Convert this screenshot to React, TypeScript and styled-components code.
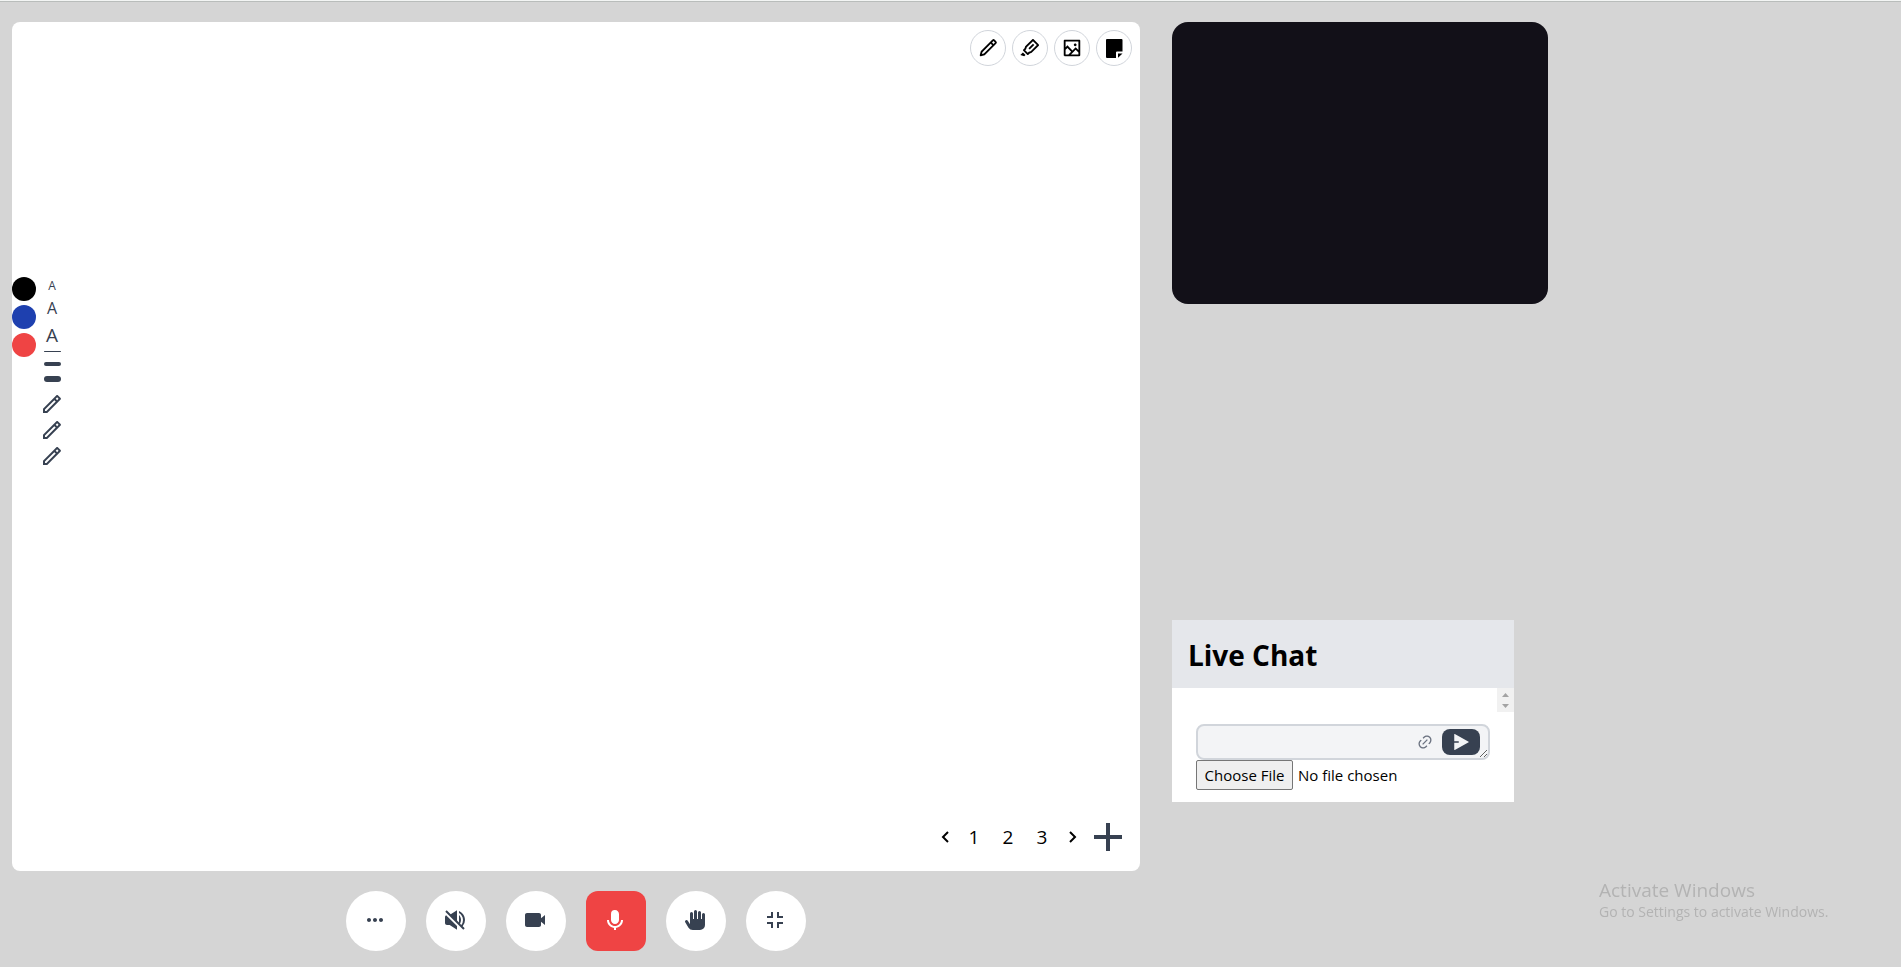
import React from 'react';
import styled, { createGlobalStyle } from 'styled-components';
import {
  BiChevronLeft,
  BiChevronRight,
  BiDotsHorizontalRounded,
  BiExitFullscreen,
  BiPencil,
  BiPlus,
  BiSolidHand,
  BiSolidMicrophone,
  BiSolidVideo,
  BiSolidVolumeMute,
} from 'react-icons/bi';
import { RiImage2Line, RiLink, RiMarkPenLine, RiPencilLine, RiSendPlane2Fill } from 'react-icons/ri';

const GlobalStyle = createGlobalStyle`
  *, *::before, *::after { box-sizing: border-box; }
  body {
    margin: 0;
    background: #d5d5d5;
    color: #000;
    font-family: 'Segoe UI', 'Open Sans', 'Noto Sans', sans-serif;
    font-size: 16px;
    line-height: 24px;
  }
  button, input, textarea { font: inherit; color: inherit; }
  button { padding: 0; border: 0; background: none; cursor: pointer; }
  svg { display: block; flex: none; }
`;

const Page = styled.div`
  display: flex;
  flex-direction: column;
  min-height: 100vh;
  border-top: 1px solid #f3f5f4;
`;

const Columns = styled.div`
  display: grid;
  grid-template-columns: minmax(0, 1128fr) minmax(0, 729fr);
  column-gap: 32px;
  flex: 1;
  padding: 20px 0 16px 12px;
  border-top: 1px solid #b9bdbb;
`;

const Classroom = styled.main`
  display: flex;
  flex-direction: column;
  gap: 20px;
`;

const Board = styled.section`
  display: flex;
  flex-direction: column;
  flex: 1;
  background: #fff;
  border-radius: 8px;
`;

const BoardTools = styled.div`
  display: flex;
  justify-content: flex-end;
  gap: 6px;
  padding: 8px;
`;

const ToolButton = styled.button`
  display: flex;
  align-items: center;
  justify-content: center;
  width: 36px;
  height: 36px;
  border: 1px solid #d1d5db;
  border-radius: 50%;
`;

const Palette = styled.div`
  display: flex;
  align-items: flex-start;
  gap: 4px;
  margin-top: 203px;
`;

const Swatches = styled.div`
  display: flex;
  flex-direction: column;
  gap: 4px;
`;

const Swatch = styled.button<{ $color: string }>`
  width: 24px;
  height: 24px;
  border-radius: 50%;
  background: ${(p) => p.$color};
`;

const Strokes = styled.div`
  display: flex;
  flex-direction: column;
  align-items: center;
  gap: 2px;
  color: #374151;
`;

const TextSize = styled.button<{ $size: number; $line: number }>`
  width: 24px;
  font-size: ${(p) => p.$size}px;
  line-height: ${(p) => p.$line}px;
`;

const Thicknesses = styled.div`
  display: flex;
  flex-direction: column;
  gap: 10px;
  margin-bottom: 8px;
`;

const Thickness = styled.button<{ $weight: number }>`
  width: 17px;
  height: ${(p) => p.$weight}px;
  border-radius: 3px;
  background: #374151;
`;

const IconButton = styled.button`
  display: flex;
`;

const Pager = styled.nav`
  display: flex;
  align-items: center;
  justify-content: flex-end;
  margin-top: auto;
  padding: 0 8px 10px;
`;

const PageNumber = styled.button`
  width: 34px;
  padding-right: 2px;
  font-size: 19px;
  font-weight: 500;
`;

const AddPage = styled.button`
  color: #374151;
`;

const CallControls = styled.div`
  display: flex;
  justify-content: center;
  gap: 20px;
`;

const CallButton = styled.button<{ $active?: boolean }>`
  display: flex;
  align-items: center;
  justify-content: center;
  width: 60px;
  height: 60px;
  padding: 0 2px 2px 0;
  border-radius: ${(p) => (p.$active ? '12px' : '50%')};
  background: ${(p) => (p.$active ? '#ef4444' : '#fff')};
  color: ${(p) => (p.$active ? '#fff' : '#374151')};
`;

const Sidebar = styled.aside`
  display: flex;
  flex-direction: column;
  justify-content: space-between;
  align-items: flex-start;
  padding-bottom: 149px;
`;

const Video = styled.div`
  width: 376px;
  max-width: 100%;
  aspect-ratio: 4 / 3;
  border-radius: 16px;
  background: #121018;
`;

const Chat = styled.section`
  width: 342px;
  max-width: 100%;
  background: #fff;
`;

const ChatTitle = styled.h2`
  margin: 0;
  padding: 17px 16px 15px;
  background: #e5e7eb;
  font-size: 28px;
  font-weight: 700;
  line-height: 36px;
`;

const Messages = styled.div`
  display: flex;
  justify-content: flex-end;
  height: 24px;
`;

const ChatForm = styled.form`
  display: flex;
  flex-direction: column;
  padding: 12px 24px;
`;

const Composer = styled.div`
  position: relative;
  display: flex;
`;

const MessageBox = styled.textarea`
  width: 100%;
  height: 36px;
  padding: 4px 92px 4px 12px;
  border: 2px solid #d1d5db;
  border-radius: 8px;
  background: #f3f4f6;
  overflow: hidden;
  resize: both;
`;

const ComposerActions = styled.div`
  position: absolute;
  top: 5px;
  right: 10px;
  display: flex;
  align-items: center;
  gap: 9px;
`;

const LinkButton = styled(IconButton)`
  color: #6b7280;
`;

const SendButton = styled.button`
  display: flex;
  align-items: center;
  justify-content: center;
  width: 38px;
  height: 26px;
  border-radius: 8px;
  background: #374151;
  color: #f3f4f6;
`;

const FileInput = styled.input`
  font-size: 15px;
  height: 30px;

  &::file-selector-button {
    height: 30px;
    width: 97px;
    margin-right: 5px;
    padding: 0;
    border: 1px solid #767676;
    border-radius: 2px;
    background: #efefef;
    color: #000;
    font: inherit;
  }
`;

const Watermark = styled.div`
  position: fixed;
  right: 66px;
  bottom: 45px;
  width: 236px;
  color: #b3b3b3;
  white-space: nowrap;
  pointer-events: none;
`;

const WatermarkTitle = styled.p`
  margin: 0;
  font-size: 19px;
  line-height: 24px;
`;

const WatermarkText = styled.p`
  margin: 0;
  font-size: 14px;
  line-height: 20px;
`;

const StickyNote = () => (
  <svg width="17" height="19" viewBox="0 0 17 19" fill="currentColor" aria-hidden="true">
    <path d="M1 0h14.500a1 1 0 0 1 1 1v11.500H11a1 1 0 0 0-1 1V19H1a1 1 0 0 1-1-1V1a1 1 0 0 1 1-1z" />
    <path d="M12 14.500h4.500L12 18.800z" />
  </svg>
);

const ScrollArrows = () => (
  <svg width="17" height="24" viewBox="0 0 17 24" aria-hidden="true">
    <rect width="17" height="24" fill="#f1f1f1" />
    <path d="M5 9l3.500-4L12 9zM5 16l3.500 4L12 16z" fill="#a3a3a3" />
  </svg>
);

const textSizes = [
  { label: 'Small text', size: 12, line: 18 },
  { label: 'Medium text', size: 16, line: 22 },
  { label: 'Large text', size: 19, line: 28 },
];

export default function App() {
  return (
    <>
      <GlobalStyle />
      <Page>
        <Columns>
          <Classroom>
            <Board aria-label="Whiteboard">
              <BoardTools>
                <ToolButton aria-label="Pencil"><BiPencil size={22} /></ToolButton>
                <ToolButton aria-label="Marker"><RiMarkPenLine size={22} /></ToolButton>
                <ToolButton aria-label="Image"><RiImage2Line size={22} /></ToolButton>
                <ToolButton aria-label="Sticky note"><StickyNote /></ToolButton>
              </BoardTools>
              <Palette>
                <Swatches>
                  <Swatch $color="#000000" aria-label="Black" />
                  <Swatch $color="#1e40af" aria-label="Blue" />
                  <Swatch $color="#ef4444" aria-label="Red" />
                </Swatches>
                <Strokes>
                  {textSizes.map((t) => (
                    <TextSize key={t.label} $size={t.size} $line={t.line} aria-label={t.label}>A</TextSize>
                  ))}
                  <Thicknesses>
                    {[1, 4, 6].map((w) => (
                      <Thickness key={w} $weight={w} aria-label={`Line ${w}`} />
                    ))}
                  </Thicknesses>
                  {[1, 2, 3].map((n) => (
                    <IconButton key={n} aria-label={`Pen ${n}`}><RiPencilLine size={24} /></IconButton>
                  ))}
                </Strokes>
              </Palette>
              <Pager aria-label="Board pages">
                <IconButton aria-label="Previous page"><BiChevronLeft size={24} /></IconButton>
                <PageNumber>1</PageNumber>
                <PageNumber>2</PageNumber>
                <PageNumber>3</PageNumber>
                <IconButton aria-label="Next page"><BiChevronRight size={24} /></IconButton>
                <AddPage aria-label="Add page"><BiPlus size={48} /></AddPage>
              </Pager>
            </Board>
            <CallControls>
              <CallButton aria-label="More"><BiDotsHorizontalRounded size={24} /></CallButton>
              <CallButton aria-label="Mute sound"><BiSolidVolumeMute size={24} /></CallButton>
              <CallButton aria-label="Camera"><BiSolidVideo size={24} /></CallButton>
              <CallButton $active aria-label="Microphone"><BiSolidMicrophone size={24} /></CallButton>
              <CallButton aria-label="Raise hand"><BiSolidHand size={24} /></CallButton>
              <CallButton aria-label="Exit full screen"><BiExitFullscreen size={24} /></CallButton>
            </CallControls>
          </Classroom>
          <Sidebar>
            <Video />
            <Chat>
              <ChatTitle>Live Chat</ChatTitle>
              <Messages><ScrollArrows /></Messages>
              <ChatForm>
                <Composer>
                  <MessageBox aria-label="Message" />
                  <ComposerActions>
                    <LinkButton type="button" aria-label="Attach link"><RiLink size={16} /></LinkButton>
                    <SendButton type="button" aria-label="Send"><RiSendPlane2Fill size={18} /></SendButton>
                  </ComposerActions>
                </Composer>
                <FileInput type="file" aria-label="Attach file" />
              </ChatForm>
            </Chat>
          </Sidebar>
        </Columns>
        <Watermark>
          <WatermarkTitle>Activate Windows</WatermarkTitle>
          <WatermarkText>Go to Settings to activate Windows.</WatermarkText>
        </Watermark>
      </Page>
    </>
  );
}
